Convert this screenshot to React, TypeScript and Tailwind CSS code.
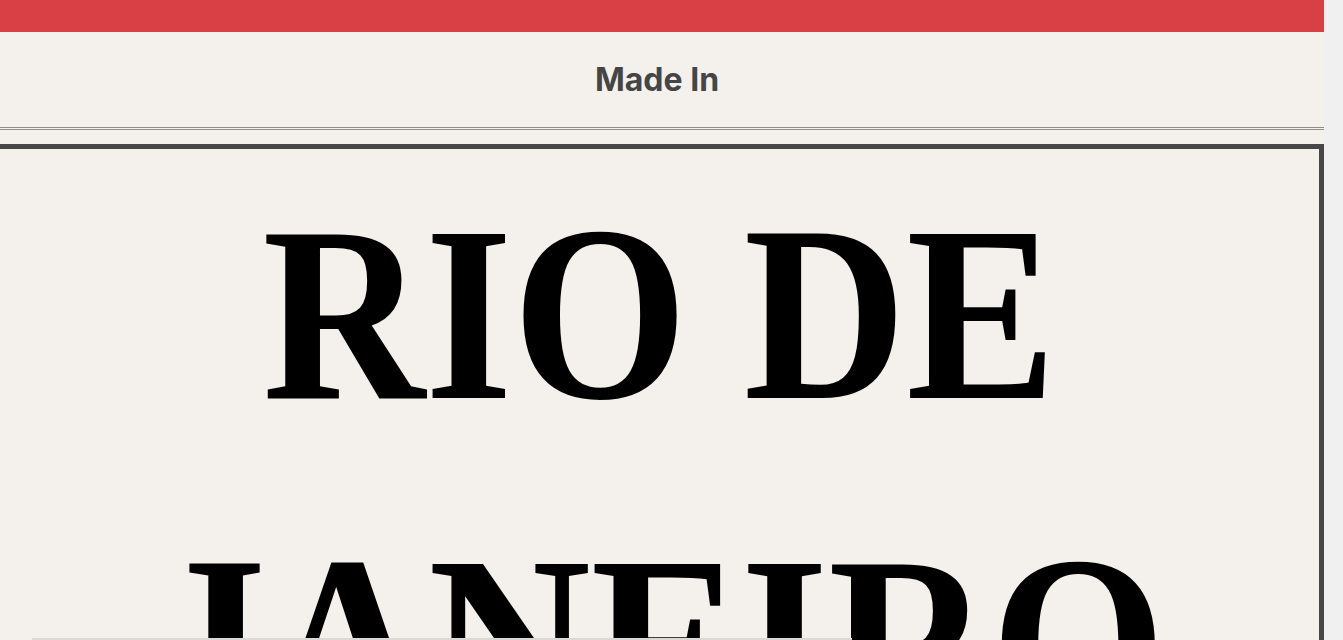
export default function App() {
  return (
    <div className="flex h-[640px] w-full overflow-hidden bg-[#f0f0f0]">
      <div className="relative w-[1324px] shrink-0 bg-[#f4f0ec]">
        <div className="h-8 bg-[#d94045]" />
        <header className="flex h-[98px] items-center justify-center border-b-[3px] border-double border-[#8e8e8e] pr-[10px]">
          <h2 className="font-['Inter',sans-serif] text-[32px] font-bold text-[#454545]">Made In</h2>
        </header>
        <section className="mt-[14px] border-[5px] border-l-0 border-[#474747]">
          <h1 className="scale-x-[0.9] text-center font-['Liberation_Serif',serif] text-[250px] font-bold leading-[330px] text-black">
            RIO DE JANEIRO
          </h1>
        </section>
        <div className="absolute bottom-0 left-8 h-[2px] w-[820px] bg-[#dcd8d4]" />
      </div>
    </div>
  );
}
